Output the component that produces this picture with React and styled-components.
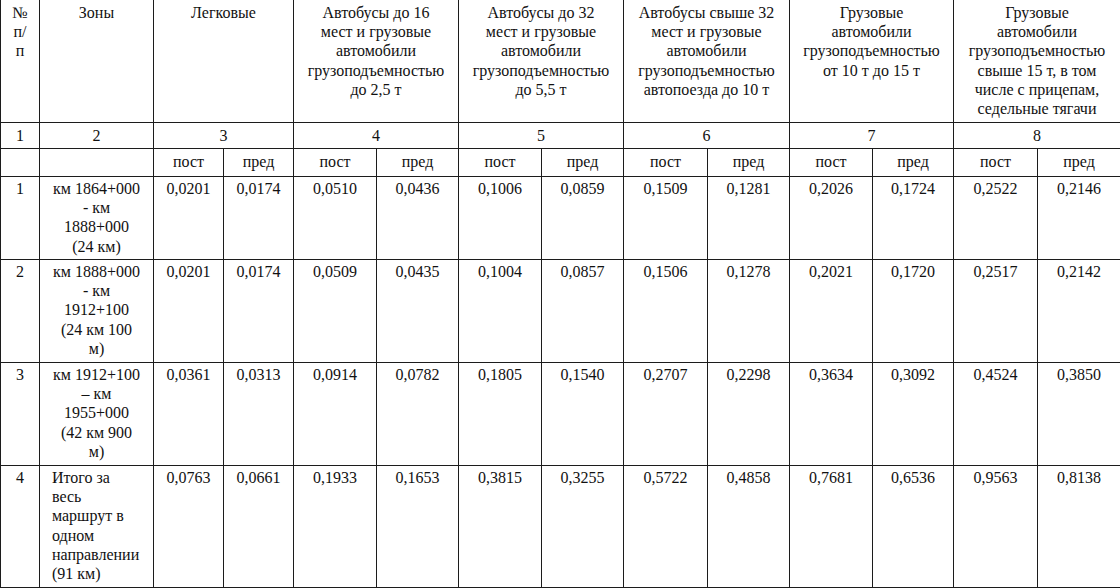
import React from 'react';
import styled, { createGlobalStyle } from 'styled-components';

const GlobalStyle = createGlobalStyle`
  html, body {
    margin: 0;
    padding: 0;
    background: #fff;
  }
  body {
    font-family: "Liberation Serif", "Times New Roman", serif;
    color: #111;
  }
`;

const Table = styled.table`
  border-collapse: collapse;
  table-layout: fixed;
  width: 1120px;
  margin-top: -1px;
  font-family: "Liberation Serif", "Times New Roman", serif;
  font-size: 16px;
  line-height: 19.2px;
  color: #111;
`;

const Row = styled.tr`
  height: ${props => props.h}px;
`;

const Cell = styled.td`
  border: 1px solid #1c1c1c;
  vertical-align: top;
  font-family: "Liberation Serif", "Times New Roman", serif;
  font-size: 16px;
  text-align: ${props => (props.left ? 'left' : 'center')};
  padding: 2px 0 0 ${props => (props.left ? '12px' : '0')};
  white-space: nowrap;
  overflow: hidden;
`;

const HeadCell = styled(Cell).attrs({ as: 'th' })`
  font-weight: normal;
  padding-top: 3px;
`;

const colWidths = [39, 114, 70, 70, 83, 82, 83, 82, 84, 82, 83, 81, 84, 83];

const headers = [
  ['Легковые'],
  ['Автобусы до 16', 'мест и грузовые', 'автомобили', 'грузоподъемностью', 'до 2,5 т'],
  ['Автобусы до 32', 'мест и грузовые', 'автомобили', 'грузоподъемностью', 'до 5,5 т'],
  ['Автобусы свыше 32', 'мест и грузовые', 'автомобили', 'грузоподъемностью', 'автопоезда до 10 т'],
  ['Грузовые', 'автомобили', 'грузоподъемностью', 'от 10 т до 15 т'],
  ['Грузовые', 'автомобили', 'грузоподъемностью', 'свыше 15 т, в том', 'числе с прицепам,', 'седельные тягачи'],
];

const rows = [
  {
    n: '1',
    h: 83,
    zone: ['км 1864+000', '- км', '1888+000', '(24 км)'],
    values: ['0,0201', '0,0174', '0,0510', '0,0436', '0,1006', '0,0859', '0,1509', '0,1281', '0,2026', '0,1724', '0,2522', '0,2146'],
  },
  {
    n: '2',
    h: 103,
    zone: ['км 1888+000', '- км', '1912+100', '(24 км 100', 'м)'],
    values: ['0,0201', '0,0174', '0,0509', '0,0435', '0,1004', '0,0857', '0,1506', '0,1278', '0,2021', '0,1720', '0,2517', '0,2142'],
  },
  {
    n: '3',
    h: 103,
    zone: ['км 1912+100', '– км', '1955+000', '(42 км 900', 'м)'],
    values: ['0,0361', '0,0313', '0,0914', '0,0782', '0,1805', '0,1540', '0,2707', '0,2298', '0,3634', '0,3092', '0,4524', '0,3850'],
  },
  {
    n: '4',
    h: 122,
    left: true,
    zone: ['Итого за', 'весь', 'маршрут в', 'одном', 'направлении', '(91 км)'],
    values: ['0,0763', '0,0661', '0,1933', '0,1653', '0,3815', '0,3255', '0,5722', '0,4858', '0,7681', '0,6536', '0,9563', '0,8138'],
  },
];

const Lines = ({ lines }) =>
  lines.map((l, i) => (
    <React.Fragment key={i}>
      {i > 0 && <br />}
      {l}
    </React.Fragment>
  ));

export default function App() {
  return (
    <>
      <GlobalStyle />
      <Table>
        <colgroup>
          {colWidths.map((w, i) => (
            <col key={i} style={{ width: w }} />
          ))}
        </colgroup>
        <thead>
          <Row h={123}>
            <HeadCell>
              <Lines lines={['№', 'п/', 'п']} />
            </HeadCell>
            <HeadCell>Зоны</HeadCell>
            {headers.map((h, i) => (
              <HeadCell key={i} colSpan={2}>
                <Lines lines={h} />
              </HeadCell>
            ))}
          </Row>
          <Row h={26}>
            <HeadCell>1</HeadCell>
            <HeadCell>2</HeadCell>
            {[3, 4, 5, 6, 7, 8].map(n => (
              <HeadCell key={n} colSpan={2}>
                {n}
              </HeadCell>
            ))}
          </Row>
          <Row h={28}>
            <HeadCell />
            <HeadCell />
            {headers.map((_, i) => (
              <React.Fragment key={i}>
                <HeadCell>пост</HeadCell>
                <HeadCell>пред</HeadCell>
              </React.Fragment>
            ))}
          </Row>
        </thead>
        <tbody>
          {rows.map(r => (
            <Row key={r.n} h={r.h}>
              <Cell>{r.n}</Cell>
              <Cell left={r.left}>
                <Lines lines={r.zone} />
              </Cell>
              {r.values.map((v, i) => (
                <Cell key={i}>{v}</Cell>
              ))}
            </Row>
          ))}
        </tbody>
      </Table>
    </>
  );
}
